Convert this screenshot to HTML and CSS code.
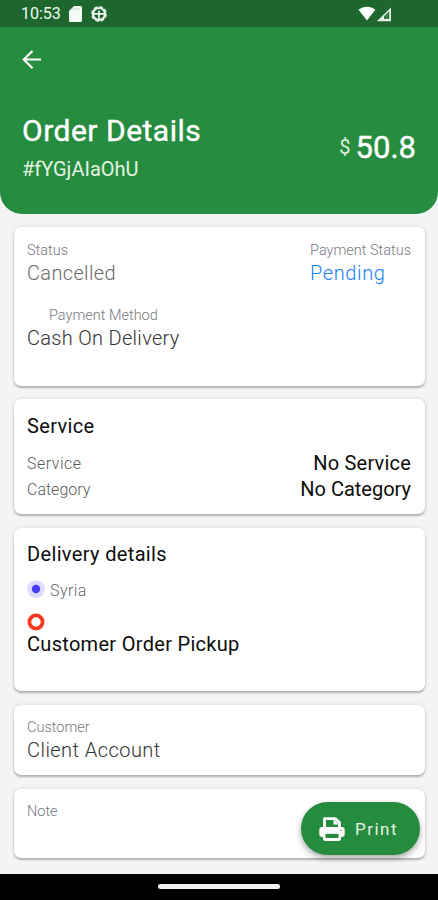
FILE: index.html
```
<!DOCTYPE html>
<html lang="en">
<head>
<meta charset="utf-8">
<title>Order Details</title>
<link rel="stylesheet" href="styles.css">
</head>
<body>

<div class="screen">
    <div class="statusbar">
        <span class="time">10:53</span>
        <svg class="sd" width="13" height="16" viewBox="0 0 13 16"><path d="M5 0h6.500a1.500 1.500 0 0 1 1.500 1.500v13a1.500 1.500 0 0 1-1.500 1.500h-10A1.500 1.500 0 0 1 0 14.500V5z" fill="#f6faf6"/><path d="M4.800 2v2M7.300 2v2M9.800 2v2" stroke="#bcd3bf" stroke-width="1"/></svg>
        <svg class="wheel" width="16" height="16" viewBox="0 0 16 16" fill="none" stroke="#eef6ee"><circle cx="8" cy="8" r="6" stroke-width="2.200"/><circle cx="8" cy="8" r="7.300" stroke-width="1.200" stroke-dasharray="3.800 1.930"/><path d="M2 7.800h12M8 4.500V14" stroke-width="1.700"/></svg>
        <svg class="signal" width="34" height="16" viewBox="0 0 34 16"><path d="M0.500 3.800C5.500-.2 12.500-.2 17.300 3.800L9 14.500z" fill="#fff"/><path d="M33 1.500v13.700H18.800z" fill="#e5efe6"/><path d="M31.200 5.500v7.400h-5V10z" fill="#1d672e"/><path d="M29 8.300v4.600" stroke="#7da886" stroke-width="1"/></svg>
    </div>

    <div class="header">
        <svg class="back" width="20" height="20" viewBox="0 0 20 20" fill="none" stroke="#fff" stroke-width="2.200"><path d="M19 9.500H2M10.500 1L1.800 9.500l8.700 8.700"/></svg>
        <div class="summary">
            <div>
                <div class="title">Order Details</div>
                <div class="order-id">#fYGjAIaOhU</div>
            </div>
            <div class="price"><span class="currency">$</span><span class="amount">50.8</span></div>
        </div>
    </div>

    <div class="cards">
        <div class="card card-status">
            <div class="row">
                <div>
                    <div class="label">Status</div>
                    <div class="value gray">Cancelled</div>
                </div>
                <div>
                    <div class="label">Payment Status</div>
                    <div class="value blue">Pending</div>
                </div>
            </div>
            <div class="method">
                <div class="label indent">Payment Method</div>
                <div class="value cash">Cash On Delivery</div>
            </div>
        </div>

        <div class="card card-service">
            <div class="heading">Service</div>
            <div class="row line">
                <span class="name">Service</span>
                <span class="info">No Service</span>
            </div>
            <div class="row line">
                <span class="name category">Category</span>
                <span class="info category">No Category</span>
            </div>
        </div>

        <div class="card card-delivery">
            <div class="heading">Delivery details</div>
            <div class="place">
                <svg width="18" height="18" viewBox="0 0 18 18"><circle cx="9" cy="9" r="8.800" fill="#dcdafd"/><circle cx="9" cy="9" r="4.200" fill="#443df5"/></svg>
                <span class="country">Syria</span>
            </div>
            <svg class="ring" width="18" height="18" viewBox="0 0 18 18"><circle cx="9" cy="9" r="6.600" fill="#fff" stroke="#fa3a1c" stroke-width="3.800"/></svg>
            <div class="pickup">Customer Order Pickup</div>
        </div>

        <div class="card card-customer">
            <div class="label">Customer</div>
            <div class="value client">Client Account</div>
        </div>

        <div class="card card-note">
            <div class="label">Note</div>
        </div>
    </div>

    <button class="print">
        <svg width="26" height="24" viewBox="0 0 26 24"><path d="M5.500 10V1.700h11L20.500 5.500V10" fill="none" stroke="#fff" stroke-width="2.800" stroke-linejoin="round"/><path d="M14.500 2v5.500H20z" fill="#fff"/><rect x="0.300" y="10" width="25.400" height="10" rx="3" fill="#fff"/><rect x="4" y="14.500" width="18" height="9.500" rx="2.500" fill="#fff"/><rect x="6.500" y="16.800" width="13" height="4.200" fill="#258b3e"/><circle cx="22" cy="13.300" r="1" fill="#8bc197"/></svg>
        <span>Print</span>
    </button>

    <div class="navbar"><div class="home"></div></div>
</div>

</body>
</html>
```

FILE: styles.css
```
* {
    box-sizing: border-box;
}

body {
    margin: 0;
    font-family: Roboto, "Noto Sans", sans-serif;
    background-color: #f4f4f4;
}

svg {
    display: block;
    flex: none;
}

.screen {
    position: relative;
    width: 438px;
    height: 900px;
    overflow: hidden;
    display: flex;
    flex-direction: column;
}

.statusbar {
    height: 27px;
    flex: none;
    background-color: #1d672e;
    color: #f2f8f2;
    display: flex;
    align-items: center;
    padding: 1px 45px 0 21px;
}

.time {
    width: 48px;
    font-size: 16px;
    line-height: 20px;
}

.wheel {
    margin-left: 9px;
}

.signal {
    margin-left: auto;
    margin-right: 1px;
}

.header {
    height: 187px;
    flex: none;
    padding: 23px 22px 0 22px;
    background-color: #268c3f;
    border-radius: 0 0 22px 22px;
    color: #fff;
}

.summary {
    display: flex;
    justify-content: space-between;
    margin-top: 41px;
}

.title {
    font-size: 30px;
    line-height: 40px;
    letter-spacing: 0.5px;
    -webkit-text-stroke: 0.4px #fff;
    white-space: nowrap;
}

.order-id {
    font-size: 20px;
    line-height: 36px;
    color: #e3f4e3;
}

.price {
    display: flex;
    align-items: center;
    gap: 5px;
    height: 72px;
}

.currency {
    font-size: 20px;
    color: #dff2df;
}

.amount {
    font-size: 31px;
    -webkit-text-stroke: 0.4px #fff;
}

.cards {
    flex: 1;
    display: flex;
    flex-direction: column;
    gap: 13px;
    padding: 13px 13px 0 14px;
}

.card {
    flex: none;
    background-color: #fff;
    border-radius: 7px;
    padding: 13px 14px 0 13px;
    box-shadow: 0 2px 2px rgba(0, 0, 0, 0.24), 0 0 4px rgba(0, 0, 0, 0.12);
}

.card-status {
    height: 159px;
}

.card-service {
    height: 115px;
}

.card-delivery {
    height: 163px;
    margin-top: 1px;
    padding-top: 12px;
}

.card-customer {
    height: 70px;
    margin-top: 1px;
    padding-top: 12px;
}

.card-note {
    height: 69px;
    margin-top: 1px;
    padding-top: 12px;
}

.row {
    display: flex;
    justify-content: space-between;
}

.label {
    height: 20px;
    font-size: 14.5px;
    font-weight: 300;
    line-height: 22px;
    color: #757a7f;
}

.value {
    font-size: 20px;
    font-weight: 300;
    line-height: 26px;
    letter-spacing: 0.35px;
    color: #333;
}

.gray {
    color: #6a6a6a;
}

.blue {
    color: #1683f5;
    letter-spacing: 0.6px;
}

.cash {
    letter-spacing: 0.3px;
}

.method {
    margin-top: 19px;
}

.indent {
    padding-left: 22px;
}

.heading {
    font-size: 20px;
    line-height: 28px;
    letter-spacing: 0.35px;
    color: #0c0c0c;
}

.card-service .heading {
    margin-bottom: 10px;
}

.line {
    align-items: center;
    height: 26px;
}

.name {
    font-size: 16px;
    font-weight: 300;
    letter-spacing: 0.5px;
    color: #5a5a5a;
}

.info {
    font-size: 20px;
    letter-spacing: 0.2px;
    color: #0c0c0c;
}

.category {
    letter-spacing: 0;
}

.place {
    display: flex;
    align-items: center;
    gap: 5px;
    height: 20px;
    margin-top: 11px;
}

.country {
    font-size: 16px;
    font-weight: 300;
    letter-spacing: 0.4px;
    padding-top: 3px;
    color: #6a6a6a;
}

.ring {
    margin-top: 14px;
}

.pickup {
    font-size: 20px;
    line-height: 26px;
    letter-spacing: 0.3px;
    color: #0c0c0c;
}

.client {
    letter-spacing: 0.45px;
}

.print {
    position: absolute;
    right: 18px;
    bottom: 45px;
    width: 119px;
    height: 53px;
    display: flex;
    align-items: center;
    gap: 10px;
    padding: 0 0 0 18px;
    border: none;
    border-radius: 27px;
    background-color: #258b3e;
    color: #e4f3e5;
    font-family: inherit;
    font-size: 17px;
    letter-spacing: 1.5px;
    box-shadow: 0 3px 6px rgba(0, 0, 0, 0.35);
}

.navbar {
    height: 26px;
    flex: none;
    display: flex;
    justify-content: center;
    padding-top: 10px;
    background-color: #000;
}

.home {
    width: 122px;
    height: 5px;
    border-radius: 3px;
    background-color: #f2f2f2;
}
```
